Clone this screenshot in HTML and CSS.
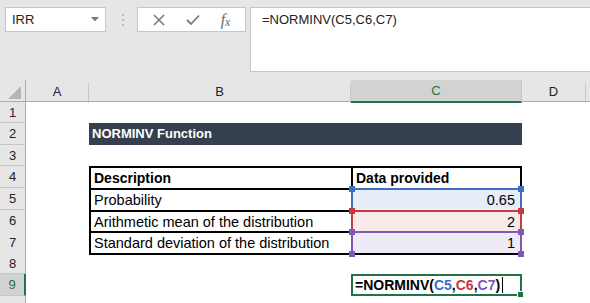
FILE: index.html
```html
<!DOCTYPE html>
<html lang="en">
<head>
    <meta charset="UTF-8">
    <title>NORMINV Function</title>
    <link rel="stylesheet" href="styles.css">
</head>
<body>
    <div class="toolbar">
        <div class="name-box">
            <span>IRR</span>
            <svg class="arrow" width="8" height="5" viewBox="0 0 8 5"><polygon points="0,0 8,0 4,4.5" fill="#7a7a7a"/></svg>
        </div>
        <div class="grip"><i></i><i></i><i></i></div>
        <div class="fx-buttons">
            <svg width="12" height="12" viewBox="0 0 12 12"><path d="M1 1 L11 11 M11 1 L1 11" stroke="#7a7a7a" stroke-width="1.6" fill="none"/></svg>
            <svg width="14" height="12" viewBox="0 0 14 12"><path d="M1 6 L5 10 L13 1.5" stroke="#7a7a7a" stroke-width="1.8" fill="none"/></svg>
            <span class="fx">f<sub>x</sub></span>
        </div>
        <div class="formula">=NORMINV(C5,C6,C7)</div>
    </div>

    <div class="sheet">
        <div class="row head">
            <div class="corner"><svg width="13" height="13" viewBox="0 0 13 13"><polygon points="13,0 13,13 0,13" fill="#b5b5b5"/></svg></div>
            <div class="col">A</div>
            <div class="col">B</div>
            <div class="col sel">C</div>
            <div class="col">D</div>
            <div></div>
        </div>
        <div class="row h21"><div class="rh">1</div></div>
        <div class="row h22"><div class="rh">2</div><div></div><div class="title">NORMINV Function</div></div>
        <div class="row h21"><div class="rh">3</div></div>
        <div class="row h22">
            <div class="rh">4</div><div></div>
            <div class="cell tb bold">Description</div>
            <div class="cell tb tr bold">Data provided</div>
        </div>
        <div class="row h22">
            <div class="rh">5</div><div></div>
            <div class="cell tb">Probability</div>
            <div class="cell num blue">0.65</div>
        </div>
        <div class="row h21">
            <div class="rh">6</div><div></div>
            <div class="cell tb">Arithmetic mean of the distribution</div>
            <div class="cell num red">2</div>
        </div>
        <div class="row h22">
            <div class="rh">7</div><div></div>
            <div class="cell tb last">Standard deviation of the distribution</div>
            <div class="cell num purple last">1<span class="dot bl"></span><span class="dot br"></span></div>
        </div>
        <div class="row h21"><div class="rh">8</div></div>
        <div class="row h22">
            <div class="rh sel">9</div><div></div><div></div>
            <div class="cell edit">=NORMINV(<span class="c-blue">C5</span>,<span class="c-red">C6</span>,<span class="c-purple">C7</span>)<span class="caret"></span><span class="handle"></span></div>
        </div>
        <div class="row h21"><div class="rh"></div></div>
    </div>
</body>
</html>
```

FILE: styles.css
```css
body {
    margin: 0;
    background: #fff;
    font-family: "Liberation Sans", Arial, sans-serif;
    overflow: hidden;
}
.toolbar {
    height: 80px;
    background: #e6e6e6;
    display: flex;
    align-items: flex-start;
    padding: 7px 0 0 5px;
    box-sizing: border-box;
}
.name-box {
    width: 101px;
    height: 25px;
    box-sizing: border-box;
    background: #fff;
    border: 1px solid #c6c6c6;
    display: flex;
    align-items: center;
    justify-content: space-between;
    padding: 0 6px 0 6px;
    font-size: 13px;
    color: #222;
}
.grip {
    width: 31px;
    height: 25px;
    display: flex;
    flex-direction: column;
    align-items: center;
    justify-content: center;
    gap: 3px;
    padding-left: 2px;
    box-sizing: border-box;
}
.grip i {
    width: 2px;
    height: 2px;
    background: #b8b8b8;
}
.fx-buttons {
    width: 109px;
    height: 25px;
    box-sizing: border-box;
    background: #fff;
    border: 1px solid #c6c6c6;
    display: flex;
    align-items: center;
    justify-content: space-around;
    padding: 0 4px;
}
.fx {
    font-family: "Liberation Serif", serif;
    font-style: italic;
    font-size: 16px;
    color: #6a6a6a;
    line-height: 1;
}
.fx sub {
    font-size: 12px;
    vertical-align: -1px;
}
.formula {
    flex: 1;
    height: 65px;
    margin-left: 4px;
    box-sizing: border-box;
    background: #fff;
    border: 1px solid #c6c6c6;
    border-right: none;
    padding: 4px 0 0 11px;
    font-size: 13px;
    color: #222;
}
.row {
    display: grid;
    grid-template-columns: 26px 63px 262px 171px 64px 1fr;
}
.h21 { height: 21px; }
.h22 { height: 22px; }
.head {
    height: 22px;
    background: #e6e6e6;
    border-bottom: 1px solid #ababab;
    box-sizing: border-box;
}
.corner {
    display: flex;
    align-items: flex-end;
    justify-content: flex-end;
    padding: 0 4px 4px 0;
    border-right: 1px solid #ababab;
}
.col {
    border-right: 1px solid #c6c6c6;
    text-align: center;
    font-size: 13px;
    color: #222;
    margin-top: 3px;
    line-height: 18px;
}
.col.sel {
    background: #d2d2d2;
    color: #217346;
    border-bottom: 2px solid #217346;
    margin-top: 0;
    line-height: 20px;
    padding-top: 1px;
}
.rh {
    background: #e6e6e6;
    border-right: 1px solid #ababab;
    border-bottom: 1px solid #c6c6c6;
    box-sizing: border-box;
    text-align: center;
    font-size: 13px;
    color: #222;
    display: flex;
    align-items: center;
    justify-content: center;
}
.rh.sel {
    background: #d2d2d2;
    color: #217346;
    border-right: 2px solid #217346;
}
.title {
    grid-column: 3 / 5;
    background: #353f4e;
    color: #fff;
    font-weight: bold;
    font-size: 13px;
    line-height: 22px;
    padding-left: 3px;
}
.cell {
    position: relative;
    font-size: 14.5px;
    line-height: 20px;
    padding: 0 3px;
    box-sizing: border-box;
    white-space: nowrap;
    color: #000;
}
.bold { font-weight: bold; font-size: 14px; }
.tb {
    border-top: 2px solid #000;
    border-left: 2px solid #000;
}
.tr { border-right: 2px solid #000; }
.tb.last { border-bottom: 2px solid #000; }
.num {
    text-align: right;
    padding-right: 5px;
    border: 2px solid;
    border-bottom: none;
}
.num.last { border-bottom: 2px solid; }
.blue { background: #e8eef8; border-color: #3f6fc3; }
.red { background: #f9eaea; border-color: #c33c40; }
.purple { background: #efebf6; border-color: #8059b8; }
.num::before,
.num::after,
.dot {
    content: "";
    position: absolute;
    width: 6px;
    height: 6px;
    top: -4px;
}
.num::before { left: -4px; }
.num::after { right: -4px; }
.blue::before, .blue::after { background: #3f6fc3; }
.red::before, .red::after { background: #c33c40; }
.purple::before, .purple::after, .dot { background: #8059b8; }
.dot.bl { top: auto; bottom: -4px; left: -4px; }
.dot.br { top: auto; bottom: -4px; right: -4px; }
.edit {
    border: 2px solid #217346;
    font-weight: bold;
    font-size: 14px;
    line-height: 18px;
    padding-left: 2px;
}
.c-blue { color: #3f6fc3; }
.c-red { color: #c33c40; }
.c-purple { color: #8059b8; }
.caret {
    display: inline-block;
    width: 1px;
    height: 16px;
    background: #000;
    vertical-align: -3px;
    margin-left: 2px;
}
.handle {
    position: absolute;
    right: -4px;
    bottom: -4px;
    width: 5px;
    height: 5px;
    background: #217346;
    border: 1px solid #fff;
}
```
